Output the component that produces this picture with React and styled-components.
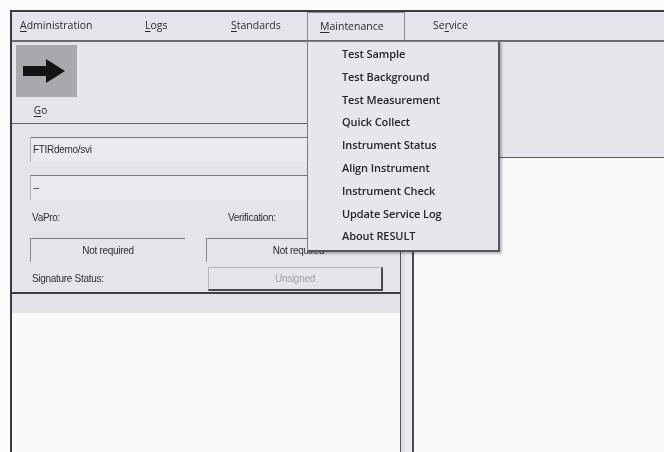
import React from 'react';
import styled, { createGlobalStyle } from 'styled-components';

const GlobalStyle = createGlobalStyle`
  html, body {
    margin: 0;
    padding: 0;
    background: #fbfbfb;
    overflow: hidden;
  }
  body {
    font-family: "Open Sans", "Liberation Sans", sans-serif;
    color: #2b2b2f;
  }
`;

const Window = styled.div`
  margin: 10px 0 0 10px;
  height: 442px;
  border-left: 2px solid #3c3c40;
  border-top: 2px solid #3c3c40;
  background: #e4e4ea;
  position: relative;
  display: flex;
  flex-direction: column;
  filter: blur(0.3px);
`;

const MenuBar = styled.div`
  display: flex;
  height: 30px;
  border-bottom: 2px solid #6a6a70;
  box-sizing: border-box;
`;

const MenuItem = styled.div`
  position: relative;
  width: ${p => p.$w}px;
  padding-left: ${p => p.$pl}px;
  box-sizing: border-box;
  font-size: 10.5px;
  line-height: 27px;
  color: #2a2a2e;
  ${p => p.$active && `
    border: 1px solid #8a8a90;
    border-bottom: none;
    line-height: 26px;
    padding-left: ${p.$pl - 1}px;
  `}

  u {
    text-decoration: underline;
    text-underline-offset: 2px;
  }
`;

const Dropdown = styled.div`
  position: absolute;
  left: -1px;
  top: 28px;
  width: 190px;
  padding: 1px 0 2px;
  background: #e6e6ec;
  border: 1px solid #7a7a80;
  border-right: 2px solid #55555a;
  border-bottom: 2px solid #55555a;
  box-shadow: 2px 2px 2px rgba(0, 0, 0, 0.25);
  z-index: 5;
`;

const DropItem = styled.div`
  height: 22.8px;
  line-height: 22.8px;
  padding-left: 34px;
  font-size: 11px;
  font-weight: 600;
  letter-spacing: -0.1px;
  color: #262629;
  white-space: nowrap;
`;

const Body = styled.div`
  flex: 1;
  display: grid;
  grid-template-columns: 388px 14px 1fr;
  min-height: 0;
`;

const LeftColumn = styled.div`
  display: flex;
  flex-direction: column;
`;

const Toolbar = styled.div`
  height: 81px;
  padding: 3px 0 0 4px;
  box-sizing: border-box;
`;

const ToolButton = styled.div`
  width: 61px;
  display: flex;
  flex-direction: column;
  align-items: center;
`;

const ButtonFace = styled.div`
  width: 61px;
  height: 52px;
  background: #a9a9ad;
  display: flex;
  align-items: center;
  padding-left: 6px;
  box-sizing: border-box;
`;

const ButtonLabel = styled.div`
  font-size: 10px;
  margin-top: 6px;
  margin-left: -12px;

  u {
    text-decoration: underline;
    text-underline-offset: 2px;
  }
`;

const Panel = styled.div`
  height: 171px;
  border-top: 1px solid #606066;
  border-bottom: 2px solid #3e3e44;
  box-sizing: border-box;
  padding: 13px 10px 0 18px;
  font-family: "Liberation Sans", sans-serif;
  font-size: 10px;
  letter-spacing: -0.3px;
  color: #2e2e33;
  display: flex;
  flex-direction: column;
`;

const TextBox = styled.div`
  height: 24px;
  margin-bottom: ${p => p.$mb || 0}px;
  border-top: 1px solid #77777d;
  border-left: 1px solid #b0b0b6;
  background: #e9e9ef;
  padding-left: 2px;
  line-height: 23px;
`;

const FieldGrid = styled.div`
  display: grid;
  grid-template-columns: 155px 1fr;
  column-gap: 21px;
  align-items: center;
`;

const Label = styled.div`
  height: ${p => p.$h || 18}px;
  line-height: ${p => p.$h || 18}px;
  padding-left: ${p => p.$indent || 2}px;
`;

const StatusBox = styled.div`
  height: 23px;
  line-height: 23px;
  text-align: center;
  border-top: 1px solid #77777d;
  border-left: 1px solid #8a8a90;
  margin: 2px 0 5px;
`;

const SignButton = styled.div`
  width: 175px;
  height: 24px;
  line-height: 22px;
  margin-left: 2px;
  text-align: center;
  color: #a2a2a8;
  border-top: 1px solid #b6b6bc;
  border-left: 1px solid #b6b6bc;
  border-right: 2px solid #48484e;
  border-bottom: 2px solid #48484e;
  box-sizing: border-box;
`;

const GrayStrip = styled.div`
  height: 19px;
  background: #e2e2e8;
`;

const ListArea = styled.div`
  flex: 1;
  background: #fafafa;
`;

const Splitter = styled.div`
  border-left: 1px solid #55555a;
  border-right: 2px solid #4a4a50;
  background: linear-gradient(90deg, #e0e0e4 0 40%, #ececf0 40% 100%);
`;

const RightColumn = styled.div`
  display: flex;
  flex-direction: column;
`;

const RightHeader = styled.div`
  height: 115px;
  border-bottom: 1px solid #5c5c62;
`;

const RightContent = styled.div`
  flex: 1;
  background: #fafafa;
`;

const GoArrow = () => (
  <svg width="44" height="24" viewBox="0 0 44 24">
    <path d="M1 7 H24 V0 L43 12 L24 24 V17 H1 Z" fill="#141416" />
  </svg>
);

const maintenanceItems = [
  'Test Sample',
  'Test Background',
  'Test Measurement',
  'Quick Collect',
  'Instrument Status',
  'Align Instrument',
  'Instrument Check',
  'Update Service Log',
  'About RESULT',
];

export default function App() {
  return (
    <>
      <GlobalStyle />
      <Window>
        <MenuBar>
          <MenuItem $w={125} $pl={8}><u>A</u>dministration</MenuItem>
          <MenuItem $w={86} $pl={8}><u>L</u>ogs</MenuItem>
          <MenuItem $w={84} $pl={8}><u>S</u>tandards</MenuItem>
          <MenuItem $w={98} $pl={13} $active>
            <u>M</u>aintenance
            <Dropdown>
              {maintenanceItems.map(item => (
                <DropItem key={item}>{item}</DropItem>
              ))}
            </Dropdown>
          </MenuItem>
          <MenuItem $w={90} $pl={28}>Se<u>r</u>vice</MenuItem>
        </MenuBar>
        <Body>
          <LeftColumn>
            <Toolbar>
              <ToolButton>
                <ButtonFace>
                  <GoArrow />
                </ButtonFace>
                <ButtonLabel><u>G</u>o</ButtonLabel>
              </ToolButton>
            </Toolbar>
            <Panel>
              <TextBox $mb={13}>FTIRdemo/svi</TextBox>
              <TextBox>--</TextBox>
              <FieldGrid>
                <Label $h={36}>VaPro:</Label>
                <Label $h={36} $indent={22}>Verification:</Label>
                <StatusBox>Not required</StatusBox>
                <StatusBox>Not required</StatusBox>
                <Label>Signature Status:</Label>
                <SignButton>Unsigned</SignButton>
              </FieldGrid>
            </Panel>
            <GrayStrip />
            <ListArea />
          </LeftColumn>
          <Splitter />
          <RightColumn>
            <RightHeader />
            <RightContent />
          </RightColumn>
        </Body>
      </Window>
    </>
  );
}
